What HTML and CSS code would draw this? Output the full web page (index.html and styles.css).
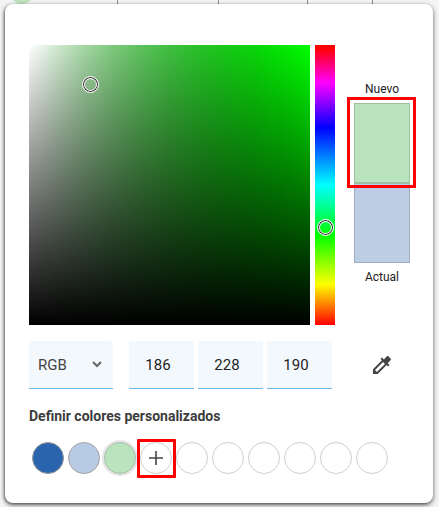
FILE: index.html
```html
<!DOCTYPE html>
<html lang="es">
<head>
<meta charset="utf-8">
<title>Selector de color</title>
<link rel="stylesheet" href="styles.css">
</head>
<body>
<div class="backdrop">
  <span class="bg-dot"></span>
  <span class="bg-line l1"></span>
  <span class="bg-line l2"></span>
  <span class="bg-line l3"></span>
  <span class="bg-line l4"></span>
</div>
<main class="dialog">
  <section class="picker">
    <div class="sv">
      <span class="handle sv-handle"></span>
    </div>
    <div class="hue">
      <span class="handle hue-handle"></span>
    </div>
    <div class="preview">
      <div class="label">Nuevo</div>
      <div class="swatches">
        <div class="new"></div>
        <div class="old"></div>
      </div>
      <div class="label label-bottom">Actual</div>
      <span class="mark mark-new"></span>
    </div>
  </section>
  <section class="inputs">
    <div class="field select">
      <span>RGB</span>
      <svg class="chev" width="10" height="7" viewBox="0 0 10 7"><path d="M1 1l4 4 4-4" fill="none" stroke="#666" stroke-width="2"/></svg>
    </div>
    <div class="channels">
      <div class="field num">186</div>
      <div class="field num">228</div>
      <div class="field num">190</div>
    </div>
    <svg class="dropper" width="24" height="24" viewBox="0 0 24 24">
      <path fill="#444" d="M20.710 5.630l-2.340-2.340c-.39-.39-1.020-.39-1.410 0l-3.120 3.120-1.930-1.910-1.410 1.410 1.420 1.420L3 16.250V21h4.750l8.920-8.920 1.420 1.420 1.410-1.410-1.920-1.920 3.120-3.120c.4-.4.4-1.030.01-1.420zM6.920 19L5 17.080l8.060-8.060 1.920 1.920L6.920 19z"/>
    </svg>
  </section>
  <h2 class="title">Definir colores personalizados</h2>
  <section class="customs">
    <span class="dot c1"></span>
    <span class="dot c2"></span>
    <span class="dot c3"></span>
    <span class="dot add">
      <svg width="16" height="16" viewBox="0 0 16 16"><path d="M8 1v14M1 8h14" stroke="#444" stroke-width="1.600"/></svg>
      <span class="mark mark-add"></span>
    </span>
    <span class="dot"></span>
    <span class="dot"></span>
    <span class="dot"></span>
    <span class="dot"></span>
    <span class="dot"></span>
    <span class="dot"></span>
  </section>
</main>
</body>
</html>
```
FILE: styles.css
```css
* { box-sizing: border-box; }
html, body { margin: 0; height: 100%; }
body {
  width: 439px;
  height: 507px;
  overflow: hidden;
  position: relative;
  background: #f4f4f4;
  font-family: Roboto, "Liberation Sans", sans-serif;
  color: #222;
  padding: 4px 6px 4px 5px;
}
.backdrop { position: absolute; inset: 0; }
.bg-dot {
  position: absolute; left: 10px; top: -20px;
  width: 24px; height: 24px; border-radius: 50%;
  background: #bfe3c1;
}
.bg-line { position: absolute; top: 0; width: 1px; height: 4px; background: #8a8a8a; }
.l1 { left: 117px; }
.l2 { left: 218px; }
.l3 { left: 307px; }
.l4 { left: 372px; }
.dialog {
  position: relative;
  width: 428px;
  height: 499px;
  background: #fff;
  border-radius: 8px;
  box-shadow: 0 2px 5px rgba(0,0,0,.55), -1px 1px 3px rgba(0,0,0,.35);
  padding: 41px 0 0 24px;
}
.picker { display: flex; height: 280px; }
.sv {
  position: relative;
  width: 281px;
  height: 280px;
  background:
    linear-gradient(to bottom, rgba(0,0,0,0), #000),
    linear-gradient(to right, #fff 0%, #cfe8cf 10%, #a3d6a3 20%, #7dc97d 30%, #5cc25c 40%, #40bf40 50%, #29c229 60%, #17c917 70%, #0ad60a 80%, #03e803 90%, #00ff00 100%);
}
.hue {
  position: relative;
  width: 20px;
  height: 280px;
  margin-left: 5px;
  background: linear-gradient(to bottom, #f00 1%, #f0f 13.500%, #00f 29.500%, #0ff 50%, #0f0 68%, #ff0 85.500%, #f00 100%);
}
.handle {
  position: absolute;
  width: 17px;
  height: 17px;
  border-radius: 50%;
  border: 1px solid #fff;
  box-shadow: inset 0 0 0 1px #222, inset 0 0 0 2px #fff;
  background: transparent;
}
.sv-handle { left: 53px; top: 30.500px; }
.hue-handle { left: 1.700px; top: 173.500px; }
.preview {
  position: relative;
  margin-left: 19px;
  width: 56px;
  padding-top: 37px;
  display: flex;
  flex-direction: column;
  align-items: center;
}
.label { font-size: 12px; line-height: 14px; height: 14px; color: #222; white-space: nowrap; }
.label-bottom { margin-top: 7px; }
.swatches { margin-top: 7px; width: 56px; height: 160px; display: flex; flex-direction: column; }
.new { height: 81px; background: #bae4be; border: 1px solid #9ebfa2; border-bottom-width: 2px; }
.old { height: 79px; background: #bccde4; border: 1px solid #9dacc3; border-top: 0; }
.mark { position: absolute; border: 3px solid #f00; pointer-events: none; }
.mark-new { left: -7px; top: 52px; width: 69px; height: 91px; }
.inputs {
  display: flex;
  align-items: center;
  margin-top: 16px;
  height: 48px;
}
.field {
  height: 48px;
  background: #f3f8fc;
  border-bottom: 1px solid #6ab7ea;
  font-size: 15px;
  display: flex;
  align-items: center;
}
.select {
  width: 84px;
  padding: 0 11px 0 9px;
  justify-content: space-between;
  color: #444;
  border-radius: 4px 4px 0 0;
}
.chev { display: block; }
.channels { display: flex; gap: 4px; margin-left: 16px; }
.num { width: 65px; justify-content: center; padding-right: 7px; color: #1f1f1f; }
.dropper { margin-left: 38px; }
.title {
  margin: 19px 0 0;
  font-size: 14px;
  line-height: 16px;
  font-weight: 700;
  color: #3c3c3c;
  height: 16px;
}
.customs {
  display: flex;
  gap: 4px;
  margin-top: 18px;
  padding-left: 3px;
}
.dot {
  position: relative;
  width: 32px;
  height: 32px;
  border-radius: 50%;
  border: 1px solid #d0d0d0;
  display: flex;
  align-items: center;
  justify-content: center;
  background: #fff;
}
.c1 { background: #2a64ac; border-color: #9a9a9a; }
.c2 { background: #b8cbe5; border-color: #a3a3a3; }
.c3 { background: #bae4be; border-color: #a8bfa9; box-shadow: 0 0 0 2px #e6e6e6; }
.mark-add { left: -4.500px; top: -4.500px; width: 39px; height: 39px; border-radius: 1px; }
```
